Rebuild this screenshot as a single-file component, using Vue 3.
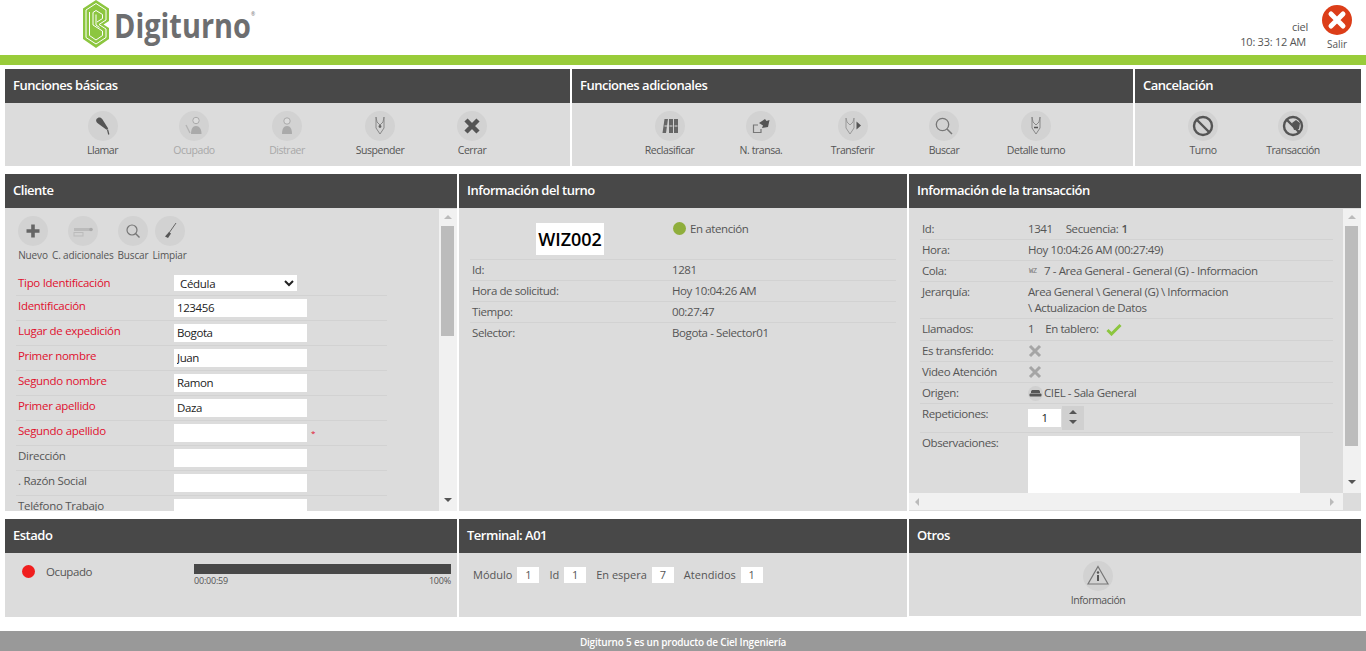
<script setup>
const icons = {
  mic: '<path d="M8.500 8c1.500-2.200 4.500-2 5.700 0l6 9.500-1.600 1.200-8.600-6.200c-1.800-1.300-2.400-3-1.500-4.500z" fill="#555"/><path d="M19.500 18.500l1.300 5" stroke="#555" stroke-width="1.200" fill="none"/>',
  busy: '<circle cx="17" cy="9.500" r="3.200" fill="#dcdcdc" stroke="#aaa"/><path d="M12 23c0-5 1.500-8 5-8s5.500 3 5.500 8z" fill="#aaa"/><path d="M7 14l4 8" stroke="#b5b5b5" stroke-width="1.400"/>',
  away: '<circle cx="15" cy="10" r="3.200" fill="#dcdcdc" stroke="#aaa"/><path d="M10 23c0-5 1.500-8 5-8s5 3 5 8z" fill="#aaa"/>',
  tie: '<path d="M11 6l1 5 3 3 3-3 1-5 0 11-4 6-4-6z" fill="none" stroke="#888"/><circle cx="15" cy="15.500" r="1.400" fill="#666"/>',
  close: '<path d="M9 9l12 12M21 9L9 21" stroke="#555" stroke-width="4.500"/>',
  binders: '<path d="M9.500 8h3.500l-2 14H7.500z" fill="#666"/><rect x="14" y="8" width="4" height="14" fill="#666"/><rect x="19" y="8" width="4" height="14" fill="#666"/><path d="M14.500 15h3M19.500 15h3M9.500 15h3" stroke="#ddd" stroke-width="1.200"/>',
  move: '<path d="M12 14H7.500v7.500H15V18" fill="none" stroke="#777" stroke-width="1.200"/><path d="M13 12l6-4 1.500 2 3-1-1.500 7-6 1 1-2.500z" fill="#555"/>',
  tieNext: '<path d="M8 7l1 4 3 3 3-3 1-4 0 10-4 6-4-6z" fill="none" stroke="#999"/><path d="M18.500 10.500l4.500 4-4.500 4z" fill="#555"/>',
  search: '<circle cx="13.500" cy="13.500" r="6.200" fill="none" stroke="#777" stroke-width="1.300"/><path d="M18 18l5 5" stroke="#777" stroke-width="1.500"/>',
  tieFace: '<path d="M11 6l1 5 3 3 3-3 1-5 0 11-4 6-4-6z" fill="none" stroke="#888"/><path d="M13 16.500h4" stroke="#555" stroke-width="1.400"/>',
  noTurn: '<circle cx="15" cy="15" r="9" fill="none" stroke="#555" stroke-width="2.400"/><path d="M9 9l12 12" stroke="#555" stroke-width="2.400"/>',
  noTrans: '<circle cx="15" cy="15" r="9" fill="none" stroke="#555" stroke-width="2.400"/><path d="M14 12l4-3 4 3-1 6-5 1z" fill="#555"/><path d="M9 9l12 12" stroke="#555" stroke-width="2.400"/>',
  plus: '<path d="M15 8.500v13M8.500 15h13" stroke="#666" stroke-width="3.600"/>',
  extra: '<rect x="6" y="12" width="17" height="3" fill="#bbb"/><rect x="6" y="16.500" width="9" height="3.500" fill="none" stroke="#bbb"/><circle cx="23" cy="13.500" r="1.800" fill="#aaa"/>',
  find: '<circle cx="14" cy="14" r="5" fill="none" stroke="#777" stroke-width="1.200"/><path d="M17.500 17.500l4 4" stroke="#777" stroke-width="1.400"/>',
  broom: '<path d="M21 7l-7 10" stroke="#666" stroke-width="1"/><path d="M14 16l2 1.500-3 4.500-3-1.500z" fill="#555"/>',
  info: '<path d="M15 5.500L25 23H5z" fill="none" stroke="#777" stroke-width="1.200"/><circle cx="15" cy="11.500" r="1.200" fill="#555"/><path d="M15 14v6" stroke="#555" stroke-width="2"/>'
}

const basicActions = [
  { label: 'Llamar', icon: 'mic' },
  { label: 'Ocupado', icon: 'busy', off: true },
  { label: 'Distraer', icon: 'away', off: true },
  { label: 'Suspender', icon: 'tie' },
  { label: 'Cerrar', icon: 'close' }
]
const extraActions = [
  { label: 'Reclasificar', icon: 'binders' },
  { label: 'N. transa.', icon: 'move' },
  { label: 'Transferir', icon: 'tieNext' },
  { label: 'Buscar', icon: 'search' },
  { label: 'Detalle turno', icon: 'tieFace' }
]
const cancelActions = [
  { label: 'Turno', icon: 'noTurn' },
  { label: 'Transacción', icon: 'noTrans' }
]
const clientTools = [
  { label: 'Nuevo', icon: 'plus' },
  { label: 'C. adicionales', icon: 'extra' },
  { label: 'Buscar', icon: 'find' },
  { label: 'Limpiar', icon: 'broom' }
]
const fields = [
  { label: 'Identificación', value: '123456', req: true },
  { label: 'Lugar de expedición', value: 'Bogota', req: true },
  { label: 'Primer nombre', value: 'Juan', req: true },
  { label: 'Segundo nombre', value: 'Ramon', req: true },
  { label: 'Primer apellido', value: 'Daza', req: true },
  { label: 'Segundo apellido', value: '', req: true, star: true },
  { label: 'Dirección', value: '' },
  { label: '. Razón Social', value: '' },
  { label: 'Teléfono Trabajo', value: '' }
]
const turnRows = [
  ['Id:', '1281'],
  ['Hora de solicitud:', 'Hoy 10:04:26 AM'],
  ['Tiempo:', '00:27:47'],
  ['Selector:', 'Bogota - Selector01']
]
const stats = [
  ['Módulo', '1'],
  ['Id', '1'],
  ['En espera', '7'],
  ['Atendidos', '1']
]
</script>

<template>
  <div class="page">
    <header class="topbar">
      <div class="logo">
        <svg class="logo-mark" width="26" height="48" viewBox="0 0 26 48">
          <path d="M13 0L26 8.500V21L20.500 24.500 26 28V39L13 48 0 39V8.500z" fill="#8cc63f"/>
          <path d="M13 3.500L23 10V20L16 24.500 23 29V37.500L13 44 3 37.500V10z" fill="none" stroke="#fff" stroke-width="1"/>
          <path d="M6.500 12V35.500L13 40 19.500 35.500V31L10 25V12.500L13 10.500 19.500 14.500V18.500L14 22" fill="none" stroke="#fff" stroke-width="1"/>
          <path d="M13 14.500V25L16.500 27.500" fill="none" stroke="#fff" stroke-width="1"/>
        </svg>
        <span class="logo-text">Digiturno</span>
        <span class="logo-reg">®</span>
      </div>
      <div class="session">
        <div class="user">ciel</div>
        <div>10: 33: 12 AM</div>
      </div>
      <div class="exit">
        <svg width="30" height="30" viewBox="0 0 30 30">
          <circle cx="15" cy="15" r="15" fill="#dc3d18"/>
          <path d="M9 9l12 12M21 9L9 21" stroke="#fff" stroke-width="5" stroke-linecap="round"/>
        </svg>
        <span>Salir</span>
      </div>
    </header>
    <div class="green-bar"></div>

    <section class="row row-actions">
      <div class="panel">
        <h2 class="panel-title">Funciones básicas</h2>
        <div class="actions actions-basic">
          <div v-for="a in basicActions" :key="a.label" class="action" :class="{ off: a.off }">
            <svg class="round-icon" viewBox="0 0 30 30" v-html="icons[a.icon]"></svg>
            <span>{{ a.label }}</span>
          </div>
        </div>
      </div>
      <div class="panel">
        <h2 class="panel-title">Funciones adicionales</h2>
        <div class="actions actions-extra">
          <div v-for="a in extraActions" :key="a.label" class="action">
            <svg class="round-icon" viewBox="0 0 30 30" v-html="icons[a.icon]"></svg>
            <span>{{ a.label }}</span>
          </div>
        </div>
      </div>
      <div class="panel">
        <h2 class="panel-title">Cancelación</h2>
        <div class="actions actions-cancel">
          <div v-for="a in cancelActions" :key="a.label" class="action">
            <svg class="round-icon" viewBox="0 0 30 30" v-html="icons[a.icon]"></svg>
            <span>{{ a.label }}</span>
          </div>
        </div>
      </div>
    </section>

    <section class="row row-main">
      <div class="panel">
        <h2 class="panel-title">Cliente</h2>
        <div class="scroll-body">
          <div class="client-content">
            <div class="tools">
              <div v-for="t in clientTools" :key="t.label" class="tool">
                <svg class="round-icon" viewBox="0 0 30 30" v-html="icons[t.icon]"></svg>
                <span>{{ t.label }}</span>
              </div>
            </div>
            <div class="form-row first">
              <label class="req">Tipo Identificación</label>
              <select class="doc-select">
                <option>Cédula</option>
              </select>
            </div>
            <div v-for="f in fields" :key="f.label" class="form-row">
              <label :class="{ req: f.req }">{{ f.label }}</label>
              <input class="text-input" type="text" :value="f.value" />
              <span v-if="f.star" class="star">*</span>
            </div>
          </div>
          <div class="vbar">
            <i class="arrow up"></i>
            <div class="thumb thumb-client"></div>
            <i class="arrow down"></i>
          </div>
        </div>
      </div>

      <div class="panel">
        <h2 class="panel-title">Información del turno</h2>
        <div class="turn-content">
          <div class="turn-head">
            <div class="ticket-cell"><div class="ticket">WIZ002</div></div>
            <div class="turn-status"><i class="dot dot-green"></i>En atención</div>
          </div>
          <div v-for="r in turnRows" :key="r[0]" class="turn-row">
            <span class="turn-label">{{ r[0] }}</span>
            <span>{{ r[1] }}</span>
          </div>
        </div>
      </div>

      <div class="panel">
        <h2 class="panel-title">Información de la transacción</h2>
        <div class="scroll-body trans-body">
          <div class="trans-content">
            <div class="t-row"><span class="t-label">Id:</span><span class="t-value"><span class="t-id">1341</span>Secuencia: <b>1</b></span></div>
            <div class="t-row"><span class="t-label">Hora:</span><span class="t-value">Hoy 10:04:26 AM (00:27:49)</span></div>
            <div class="t-row"><span class="t-label">Cola:</span><span class="t-value"><span class="wz">WZ</span>7 - Area General - General (G) - Informacion</span></div>
            <div class="t-row"><span class="t-label">Jerarquía:</span><span class="t-value">Area General \ General (G) \ Informacion<br />\ Actualizacion de Datos</span></div>
            <div class="t-row t-tall">
              <span class="t-label">Llamados:</span>
              <span class="t-value">
                <span class="t-calls">1</span>En tablero:
                <svg class="check" width="16" height="13" viewBox="0 0 16 13"><path d="M1.500 7l4 4 9-9" fill="none" stroke="#8cc63f" stroke-width="3"/></svg>
              </span>
            </div>
            <div class="t-row"><span class="t-label">Es transferido:</span><span class="t-value"><svg width="14" height="14" viewBox="0 0 14 14"><path d="M2 2l10 10M12 2L2 12" stroke="#a5a5a5" stroke-width="3"/></svg></span></div>
            <div class="t-row"><span class="t-label">Video Atención</span><span class="t-value"><svg width="14" height="14" viewBox="0 0 14 14"><path d="M2 2l10 10M12 2L2 12" stroke="#a5a5a5" stroke-width="3"/></svg></span></div>
            <div class="t-row">
              <span class="t-label">Origen:</span>
              <span class="t-value">
                <svg class="sofa" width="15" height="15" viewBox="0 0 15 15"><circle cx="7.500" cy="7.500" r="7.500" fill="#d0d0d0"/><path d="M3 5.500c0-1 1-1.500 2-1.500h5c1 0 2 .5 2 1.500V7H3z" fill="#555"/><rect x="1.500" y="7.500" width="12" height="3" rx="1" fill="#555"/></svg>CIEL - Sala General
              </span>
            </div>
            <div class="t-row t-spin">
              <span class="t-label">Repeticiones:</span>
              <span class="spinner">
                <span class="spin-input">1</span>
                <span class="spin-btns"><i class="arrow up dark"></i><i class="arrow down dark"></i></span>
              </span>
            </div>
            <div class="t-obs">
              <span class="t-label">Observaciones:</span>
              <div class="obs-box"></div>
            </div>
          </div>
          <div class="vbar">
            <i class="arrow up"></i>
            <div class="thumb thumb-trans"></div>
            <i class="arrow down"></i>
          </div>
          <div class="hbar">
            <i class="arrow left"></i>
            <i class="arrow right"></i>
          </div>
        </div>
      </div>
    </section>

    <section class="row row-bottom">
      <div class="panel">
        <h2 class="panel-title">Estado</h2>
        <div class="state">
          <i class="dot dot-red"></i>
          <span class="state-label">Ocupado</span>
          <div class="progress">
            <div class="progress-bar"></div>
            <div class="progress-text"><span>00:00:59</span><span>100%</span></div>
          </div>
        </div>
      </div>
      <div class="panel">
        <h2 class="panel-title">Terminal: A01</h2>
        <div class="stats">
          <div v-for="s in stats" :key="s[0]" class="stat">
            <span>{{ s[0] }}</span>
            <span class="stat-box">{{ s[1] }}</span>
          </div>
        </div>
      </div>
      <div class="panel panel-short">
        <h2 class="panel-title">Otros</h2>
        <div class="others">
          <div class="action">
            <svg class="round-icon" viewBox="0 0 30 30" v-html="icons.info"></svg>
            <span>Información</span>
          </div>
        </div>
      </div>
    </section>

    <footer class="footer">Digiturno 5 es un producto de Ciel Ingeniería</footer>
  </div>
</template>

<style>
html, body {
  margin: 0;
  background: #fff;
  overflow: hidden;
}
</style>

<style scoped>
.page {
  height: 651px;
  font-family: "Open Sans", "Liberation Sans", sans-serif;
  font-size: 11px;
  color: #555;
  overflow: hidden;
}

.topbar {
  height: 55px;
  display: flex;
  padding-right: 14px;
}
.logo {
  display: flex;
  align-items: flex-start;
  margin-left: 83px;
  margin-right: auto;
}
.logo-mark {
  flex: none;
}
.logo-text {
  display: block;
  font-size: 34px;
  line-height: 50px;
  font-weight: 700;
  color: #6d6e70;
  margin-left: 5px;
  width: 137px;
  transform: scaleX(0.85);
  transform-origin: left center;
}
.logo-reg {
  font-size: 5px;
  line-height: 28px;
  color: #6d6e70;
}
.session {
  text-align: right;
  padding-top: 19px;
  line-height: 15px;
  font-size: 11px;
  letter-spacing: -0.25px;
  margin-right: 16px;
}
.session .user {
  margin-right: -2px;
}
.exit {
  width: 30px;
  padding-top: 5px;
  display: flex;
  flex-direction: column;
  align-items: center;
  font-size: 10px;
  line-height: 14px;
}
.exit svg {
  display: block;
  margin-bottom: 2px;
}
.green-bar {
  height: 10px;
  background: #99cc3a;
}

.row {
  display: grid;
  column-gap: 2px;
  margin: 0 5px;
}
.row-actions {
  grid-template-columns: 565px 561px 226px;
  height: 97px;
  margin-top: 4px;
}
.row-main {
  grid-template-columns: 452px 448px 452px;
  height: 337px;
  margin-top: 8px;
}
.row-bottom {
  grid-template-columns: 452px 448px 452px;
  height: 98px;
  margin-top: 8px;
}

.panel {
  background: #dcdcdc;
  display: flex;
  flex-direction: column;
  min-height: 0;
  overflow: hidden;
}
.panel-short {
  height: 97px;
}
.panel-title {
  margin: 0;
  height: 34px;
  flex: none;
  padding: 0 8px;
  background: #484848;
  color: #fff;
  font-size: 13px;
  font-weight: 600;
  line-height: 33px;
  letter-spacing: -0.48px;
}

.actions {
  display: grid;
  padding-top: 8px;
}
.actions-basic {
  grid-template-columns: 91px 92px 94px 92px 92px;
  padding-left: 52px;
}
.actions-extra {
  grid-template-columns: 91px 92px 91px 92px 92px;
  padding-left: 52px;
}
.actions-cancel {
  grid-template-columns: 90px 90px;
  padding-left: 23px;
}
.action {
  display: flex;
  flex-direction: column;
  align-items: center;
  font-size: 10.500px;
  letter-spacing: -0.45px;
  line-height: 16px;
  white-space: nowrap;
}
.action.off {
  color: #a8a8a8;
}
.round-icon {
  width: 30px;
  height: 30px;
  flex: none;
  display: block;
  border-radius: 50%;
  background: #d2d2d2;
  margin-bottom: 1px;
}

.scroll-body {
  flex: 1;
  min-height: 0;
  display: flex;
  overflow: hidden;
}
.client-content {
  flex: 1;
  min-width: 0;
  padding: 8px 0 0 11px;
}
.tools {
  display: flex;
  gap: 4px;
  padding-left: 2px;
  height: 56px;
}
.tool {
  display: flex;
  flex-direction: column;
  align-items: center;
  font-size: 10px;
  letter-spacing: -0.15px;
  line-height: 16px;
  white-space: nowrap;
}
.form-row {
  width: 371px;
  height: 24px;
  display: flex;
  align-items: flex-start;
  border-bottom: 1px solid #d2d2d2;
  font-size: 11.500px;
  letter-spacing: -0.3px;
  line-height: 16px;
}
.form-row label {
  width: 158px;
  flex: none;
  padding: 2px 0 0 2px;
  box-sizing: border-box;
}
.form-row .req {
  color: #e0102e;
}
.form-row.first {
  height: 23px;
}
.form-row.first label {
  padding-top: 3px;
}
.doc-select {
  width: 123px;
  height: 16px;
  margin-top: 3px;
  border: 0;
  padding: 0 0 0 2px;
  background: #fff;
  font: 11.500px "Open Sans", sans-serif;
  letter-spacing: -0.3px;
  color: #222;
}
.text-input {
  width: 133px;
  height: 18px;
  margin-top: 3px;
  border: 0;
  padding: 0 3px 1px;
  box-sizing: border-box;
  background: #fff;
  font: 11.500px "Open Sans", sans-serif;
  letter-spacing: -0.4px;
  color: #222;
  outline: none;
}
.star {
  margin: 4px 0 0 4px;
  color: #e0102e;
  font-size: 8px;
}

.vbar {
  width: 18px;
  flex: none;
  margin-top: 1px;
  background: #f1f1f1;
  display: flex;
  flex-direction: column;
  align-items: center;
  position: relative;
}
.thumb {
  width: 13px;
  background: #bcbcbc;
  position: absolute;
  left: 2px;
  top: 17px;
}
.thumb-client {
  height: 110px;
}
.thumb-trans {
  height: 220px;
}
.arrow {
  display: block;
  width: 0;
  height: 0;
  border: 4px solid transparent;
}
.arrow.up {
  border-top: 0;
  border-bottom: 4px solid #bbb;
  margin-top: 6px;
}
.vbar .arrow.down {
  border-bottom: 0;
  border-top: 4px solid #555;
  margin-top: auto;
  margin-bottom: 9px;
}
.arrow.left {
  border-left: 0;
  border-right: 4px solid #bbb;
}
.arrow.right {
  border-right: 0;
  border-left: 4px solid #bbb;
}

.turn-content {
  padding: 0 11px;
  font-size: 11.500px;
  letter-spacing: -0.4px;
  line-height: 16px;
}
.turn-head {
  display: flex;
  height: 51px;
  border-bottom: 1px solid #d2d2d2;
}
.ticket-cell {
  width: 200px;
  padding-top: 15px;
  display: flex;
  justify-content: center;
}
.ticket {
  width: 68px;
  height: 32px;
  background: #fff;
  color: #000;
  font-size: 18px;
  font-weight: 600;
  letter-spacing: 0;
  line-height: 33px;
  text-align: center;
}
.turn-status {
  padding: 13px 0 0 3px;
  display: flex;
  align-items: flex-start;
}
.dot {
  display: block;
  width: 13px;
  height: 13px;
  border-radius: 50%;
  flex: none;
}
.dot-green {
  background: #8fae3c;
  margin: 1px 4px 0 0;
}
.dot-red {
  background: #f01e1e;
  margin-top: 1px;
}
.turn-row {
  display: flex;
  height: 21px;
  padding: 2px 0 0 2px;
  box-sizing: border-box;
  border-bottom: 1px solid #d2d2d2;
}
.turn-row:last-child {
  border-bottom: 0;
}
.turn-label {
  width: 200px;
  flex: none;
}

.trans-body {
  flex-wrap: wrap;
  align-content: flex-start;
}
.trans-content {
  width: 434px;
  height: 285px;
  padding: 11px 0 0 11px;
  box-sizing: border-box;
  overflow: hidden;
  font-size: 11.500px;
  letter-spacing: -0.4px;
  line-height: 16px;
}
.trans-body .vbar {
  height: 284px;
}
.t-row {
  width: 413px;
  display: flex;
  padding: 2px 0;
  border-bottom: 1px solid #d2d2d2;
}
.t-tall {
  padding-bottom: 3px;
}
.t-label {
  width: 108px;
  flex: none;
  padding-left: 2px;
  box-sizing: border-box;
}
.t-value {
  display: flex;
  flex-wrap: wrap;
  align-items: center;
  min-height: 16px;
}
.t-row:nth-child(4) .t-value {
  display: block;
}
.t-id {
  margin-right: 13px;
}
.t-value b {
  font-weight: 600;
  margin-left: 3px;
}
.t-calls {
  margin-right: 11px;
}
.check {
  margin-left: 7px;
}
.wz {
  width: 12px;
  margin: 0 3px 0 1px;
  font-size: 7px;
  font-family: "DejaVu Sans Mono", monospace;
  color: #777;
}
.sofa {
  margin-right: 1px;
}
.t-spin {
  height: 24px;
}
.spinner {
  display: flex;
}
.spin-input {
  width: 33px;
  height: 18px;
  margin-top: 3px;
  background: #fff;
  color: #222;
  text-align: center;
  line-height: 18px;
}
.spin-btns {
  width: 22px;
  height: 24px;
  margin-left: 1px;
  background: #d0d0d0;
  display: flex;
  flex-direction: column;
  align-items: center;
}
.arrow.dark.up {
  border-bottom-color: #555;
  margin-top: 4px;
}
.arrow.dark.down {
  border-bottom: 0;
  border-top: 4px solid #555;
  margin-top: 6px;
}
.t-obs {
  display: flex;
  padding-top: 3px;
}
.t-obs .t-label {
  margin-top: -1px;
}
.obs-box {
  width: 272px;
  height: 60px;
  background: #fff;
}
.hbar {
  width: 434px;
  height: 17px;
  background: #f1f1f1;
  display: flex;
  align-items: center;
  justify-content: space-between;
  padding: 0 9px 0 6px;
  box-sizing: border-box;
}

.state {
  display: flex;
  padding: 11px 6px 0 17px;
  font-size: 11.500px;
  letter-spacing: -0.4px;
  line-height: 16px;
}
.state-label {
  width: 148px;
  margin-left: 11px;
  flex: none;
}
.progress {
  flex: 1;
}
.progress-bar {
  height: 10px;
  background: #484848;
}
.progress-text {
  display: flex;
  justify-content: space-between;
  font-size: 9px;
  letter-spacing: -0.2px;
  line-height: 14px;
}
.stats {
  display: flex;
  gap: 10px;
  padding: 14px 0 0 14px;
  font-size: 11px;
  line-height: 16px;
}
.stat {
  display: flex;
  gap: 5px;
}
.stat-box {
  width: 22px;
  height: 16px;
  background: #fff;
  text-align: center;
}
.others {
  padding: 8px 74px 0 0;
  display: flex;
  justify-content: center;
}

.footer {
  margin-top: 14px;
  height: 20px;
  background: #999;
  color: #fff;
  font-size: 10px;
  font-weight: 600;
  letter-spacing: -0.2px;
  line-height: 22px;
  text-align: center;
}
</style>
